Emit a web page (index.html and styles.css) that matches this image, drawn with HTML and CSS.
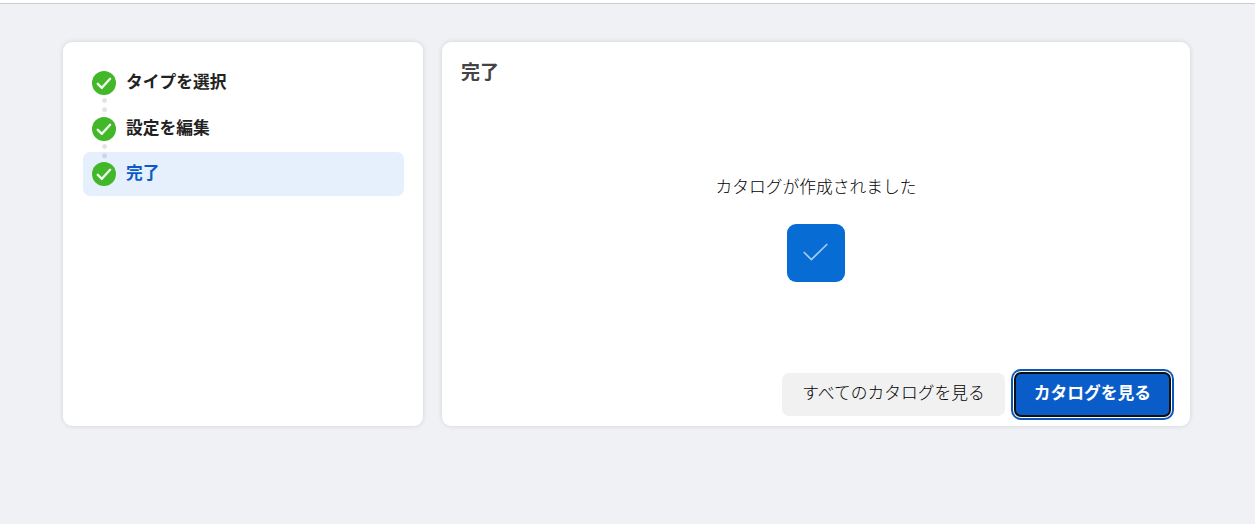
FILE: index.html
```
<!DOCTYPE html>
<html lang="ja">
<head>
    <meta charset="UTF-8">
    <title>完了</title>
    <link rel="stylesheet" href="styles.css">
</head>
<body>
    <header class="topbar"></header>

    <main class="wizard">
        <ol class="steps">
            <li class="step">
                <svg class="step-icon" viewBox="0 0 24 24"><circle cx="12" cy="12" r="12"/><path d="M5.8 12.8l4.1 4 8.2-9"/></svg>
                <span>タイプを選択</span>
                <i class="dots"></i>
            </li>
            <li class="step">
                <svg class="step-icon" viewBox="0 0 24 24"><circle cx="12" cy="12" r="12"/><path d="M5.8 12.8l4.1 4 8.2-9"/></svg>
                <span>設定を編集</span>
                <i class="dots"></i>
            </li>
            <li class="step active">
                <svg class="step-icon" viewBox="0 0 24 24"><circle cx="12" cy="12" r="12"/><path d="M5.8 12.8l4.1 4 8.2-9"/></svg>
                <span>完了</span>
            </li>
        </ol>

        <section class="panel">
            <h1>完了</h1>
            <div class="result">
                <p>カタログが作成されました</p>
                <div class="result-icon">
                    <svg viewBox="0 0 58 58"><path d="M16.7 28l7.7 7.5L40.3 20"/></svg>
                </div>
            </div>
            <div class="actions">
                <button class="btn">すべてのカタログを見る</button>
                <button class="btn primary">カタログを見る</button>
            </div>
        </section>
    </main>
</body>
</html>
```

FILE: styles.css
```
* {
    box-sizing: border-box;
}
body {
    margin: 0;
    height: 524px;
    background-color: #f0f1f5;
    color: #222;
    font-family: "Noto Sans CJK JP", sans-serif;
    font-size: 16.75px;
    line-height: 24px;
}
.topbar {
    height: 4px;
    background-color: #fff;
    border-bottom: 1px solid #cbccd0;
}
.wizard {
    display: flex;
    gap: 19px;
    padding: 38px 65px 0 63px;
}
.steps, .panel {
    height: 384px;
    background-color: #fff;
    border-radius: 9px;
    box-shadow: 0 0 5px rgba(0, 0, 0, 0.13);
}
.steps {
    width: 360px;
    margin: 0;
    padding: 19px 19px 0 20px;
    list-style: none;
}
.step {
    position: relative;
    display: flex;
    align-items: center;
    gap: 10px;
    height: 44px;
    margin-bottom: 2px;
    padding-left: 9px;
    border-radius: 7px;
    font-weight: bold;
}
.step:nth-child(2) {
    margin-bottom: 1px;
}
.step span {
    margin-top: -4px;
}
.step.active {
    background-color: #e6f0fd;
    color: #0a5bc9;
}
.step-icon {
    width: 24px;
    height: 24px;
    fill: #42b72a;
}
.step-icon path {
    fill: none;
    stroke: #f0faee;
    stroke-width: 2.4;
    stroke-linecap: round;
    stroke-linejoin: round;
}
/* connector between two steps */
.dots {
    position: absolute;
    z-index: 1;
    top: 37px;
    left: 19px;
    width: 5px;
    height: 15px;
    background: radial-gradient(circle at 2.5px 2.5px, rgba(0, 0, 0, 0.11) 2px, transparent 2.8px) 0 0 / 5px 9.3px;
}
.panel {
    flex: 1;
    display: flex;
    flex-direction: column;
    padding: 17px 19px 9px;
}
h1 {
    margin: 0;
    color: #444;
    font-size: 19px;
    line-height: 24px;
}
.result {
    flex: 1;
    display: flex;
    flex-direction: column;
    align-items: center;
    padding-top: 91px;
    color: #000;
    font-weight: 300;
}
.result p {
    margin: 0 0 26px;
}
.result-icon {
    width: 58px;
    height: 58px;
    background-color: #076cd3;
    border-radius: 9px;
}
.result-icon path {
    fill: none;
    stroke: #a9cbed;
    stroke-width: 1.7;
}
.actions {
    display: flex;
    justify-content: flex-end;
    gap: 9px;
}
.btn {
    width: 223px;
    height: 43px;
    padding: 0 0 5px;
    background-color: #f1f1f1;
    color: #000;
    border: none;
    border-radius: 7px;
    font: inherit;
    font-weight: 300;
}
.btn.primary {
    width: 157px;
    height: 45px;
    margin-top: -1px;
    background-color: #0a5dc9;
    color: #fff;
    border: 2px solid #101010;
    box-shadow: 0 0 0 1px #fff, 0 0 0 3px #0d57b8;
    font-weight: bold;
}
```
